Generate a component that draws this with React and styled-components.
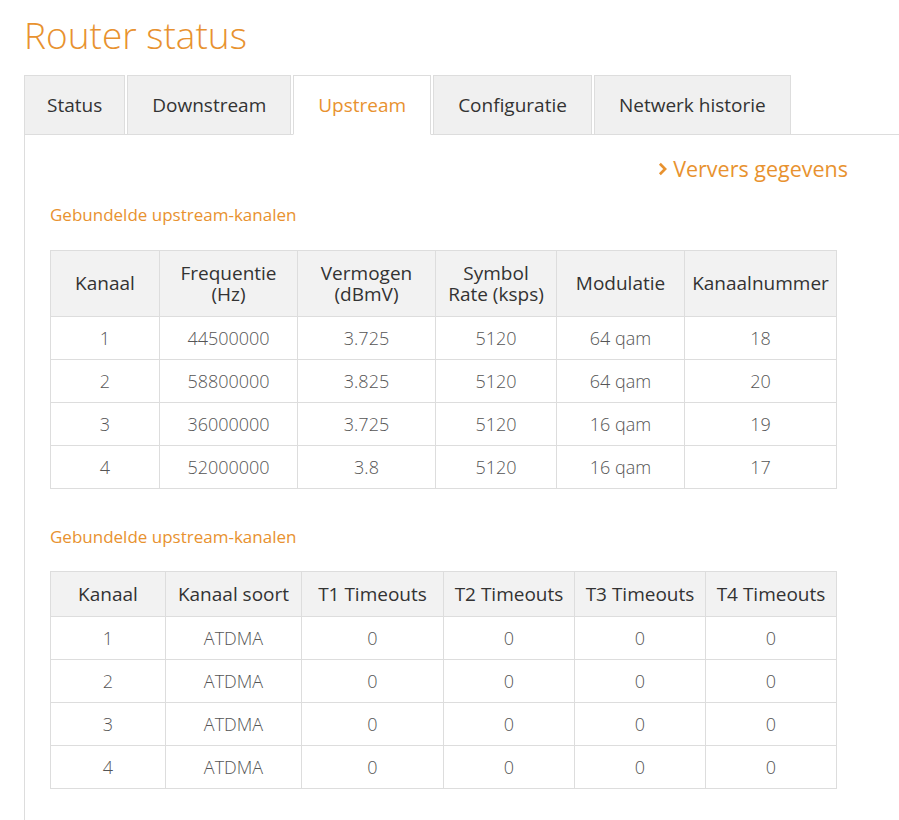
import React from "react";
import styled, { createGlobalStyle } from "styled-components";

const GlobalStyle = createGlobalStyle`
  body {
    margin: 0;
    background: #ffffff;
    font-family: "Open Sans", "Noto Sans", sans-serif;
  }
`;

const tabs = ["Status", "Downstream", "Upstream", "Configuratie", "Netwerk historie"];

const channels = [
  ["1", "44500000", "3.725", "5120", "64 qam", "18"],
  ["2", "58800000", "3.825", "5120", "64 qam", "20"],
  ["3", "36000000", "3.725", "5120", "16 qam", "19"],
  ["4", "52000000", "3.8", "5120", "16 qam", "17"],
];

const timeouts = [
  ["1", "ATDMA", "0", "0", "0", "0"],
  ["2", "ATDMA", "0", "0", "0", "0"],
  ["3", "ATDMA", "0", "0", "0", "0"],
  ["4", "ATDMA", "0", "0", "0", "0"],
];

const DataTable = ({ widths, head, rows, headHeight }) => (
  <Table>
    <colgroup>
      {widths.map((w, i) => (
        <col key={i} style={{ width: w }} />
      ))}
    </colgroup>
    <thead>
      <tr>
        {head.map((h, i) => (
          <Th key={i} $h={headHeight}>
            {h}
          </Th>
        ))}
      </tr>
    </thead>
    <tbody>
      {rows.map((r, i) => (
        <tr key={i}>
          {r.map((c, j) => (
            <Td key={j}>{c}</Td>
          ))}
        </tr>
      ))}
    </tbody>
  </Table>
);

const App = () => {
  return (
    <Page>
      <GlobalStyle />
      <Title>Router status</Title>
      <TabBar>
        {tabs.map((t, i) => (
          <Tab key={t} $first={i === 0} $active={t === "Upstream"}>
            {t}
          </Tab>
        ))}
      </TabBar>
      <Panel>
        <RefreshRow>
          <RefreshLink href="#">
            <Chevron viewBox="0 0 10 16">
              <path d="M2 2 L8 8 L2 14" />
            </Chevron>
            Ververs gegevens
          </RefreshLink>
        </RefreshRow>
        <SectionTitle>Gebundelde upstream-kanalen</SectionTitle>
        <DataTable
          widths={[109, 138, 138, 121, 128, 152]}
          headHeight={65}
          head={[
            "Kanaal",
            <>Frequentie<br />(Hz)</>,
            <>Vermogen<br />(dBmV)</>,
            <>Symbol<br />Rate (ksps)</>,
            "Modulatie",
            "Kanaalnummer",
          ]}
          rows={channels}
        />
        <SectionTitle $top={36} $bottom={23}>Gebundelde upstream-kanalen</SectionTitle>
        <DataTable
          widths={[115, 136, 142, 131, 131, 131]}
          headHeight={44}
          head={["Kanaal", "Kanaal soort", "T1 Timeouts", "T2 Timeouts", "T3 Timeouts", "T4 Timeouts"]}
          rows={timeouts}
        />
      </Panel>
    </Page>
  );
};

export default App;

const Page = styled.div`
  padding: 9px 0 0 24px;
`;

const Title = styled.h1`
  margin: 0 0 14px;
  font-weight: 300;
  font-size: 37px;
  line-height: 52px;
  color: #e8922f;
`;

const TabBar = styled.div`
  display: flex;
  gap: 2px;
  position: relative;
  z-index: 1;
  margin-bottom: -1px;
`;

const Tab = styled.div`
  box-sizing: border-box;
  height: 60px;
  padding: 0 ${(p) => (p.$first ? 22 : 24)}px;
  display: flex;
  align-items: center;
  font-size: 19px;
  color: ${(p) => (p.$active ? "#e8922f" : "#333333")};
  background: ${(p) => (p.$active ? "#ffffff" : "#f0f0f0")};
  border: 1px solid #dddddd;
  border-bottom-color: ${(p) => (p.$active ? "#ffffff" : "#dddddd")};
`;

const Panel = styled.div`
  border: 1px solid #dddddd;
  border-right: none;
  padding: 19px 0 40px 25px;
  min-height: 680px;
`;

const RefreshRow = styled.div`
  display: flex;
  justify-content: flex-end;
  padding-right: 51px;
`;

const RefreshLink = styled.a`
  display: flex;
  align-items: center;
  gap: 6px;
  font-size: 21.5px;
  color: #e8922f;
  text-decoration: none;
`;

const Chevron = styled.svg`
  width: 9px;
  height: 14px;
  fill: none;
  stroke: #e8922f;
  stroke-width: 3;
`;

const SectionTitle = styled.h2`
  margin: ${(p) => p.$top || 20}px 0 ${(p) => p.$bottom || 24}px;
  font-size: 17px;
  font-weight: 400;
  color: #e8922f;
`;

const Table = styled.table`
  border-collapse: collapse;
  table-layout: fixed;
  width: 786px;
`;

const Th = styled.th`
  height: ${(p) => p.$h}px;
  padding: 0;
  background: #f2f2f2;
  border: 1px solid #dddddd;
  font-size: 19px;
  font-weight: 400;
  line-height: 21px;
  color: #333333;
  text-align: center;
`;

const Td = styled.td`
  height: 42px;
  padding: 0;
  border: 1px solid #dddddd;
  font-size: 18px;
  font-weight: 300;
  color: #555555;
  text-align: center;
`;
